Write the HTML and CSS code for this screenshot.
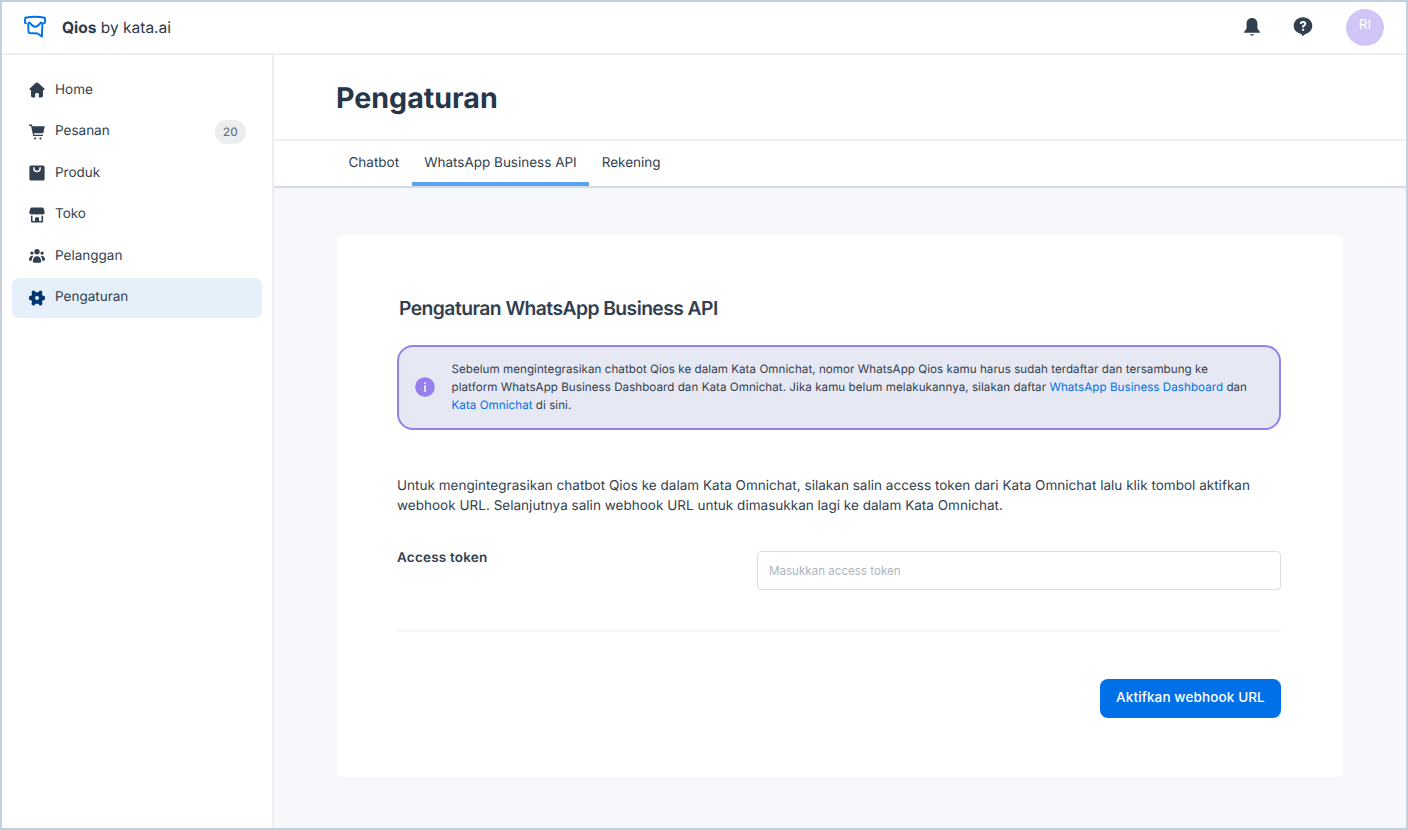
FILE: index.html
```html
<!DOCTYPE html>
<html lang="id">
<head>
<meta charset="utf-8">
<title>Qios by kata.ai</title>
<link rel="stylesheet" href="styles.css">
</head>
<body>
<div class="app">
  <header class="topbar">
    <svg class="logo" viewBox="0 0 24 24" fill="none" stroke="#0070ea" stroke-width="1.9" stroke-linejoin="round" stroke-linecap="round">
      <path d="M2.9 8.2Q1.700 8.200 1.900 7L2.300 2.700Q12 .9 21.800 2.700L22.200 7Q22.200 8.200 20.800 8.200"/>
      <path d="M5.200 9.200Q5.800 6.300 7.300 8.400Q12.300 15 17.200 8.400Q18.600 6.300 19.400 9.200L18.900 21.600 14.600 18.500 6.700 18Q5.600 17.900 5.500 16.800Z"/>
    </svg>
    <div class="brand"><b>Qios</b> by kata.ai</div>
    <div class="actions">
      <svg class="bell" viewBox="0 0 16 18" fill="#323f4f"><path d="M8 0C4.8 0 2.600 2.4 2.600 5.3V9.5Q2.600 11 1.2 12.500Q0 13.500.1 14.700H15.900Q16 13.500 14.8 12.500Q13.400 11 13.400 9.5V5.3C13.400 2.4 11.2 0 8 0ZM5.8 16.300H10.2Q9.600 17.700 8 17.700T5.8 16.300Z"/></svg>
      <svg class="help" viewBox="0 0 20 20"><path fill="#323f4f" d="M10 .3C4.700 .3.700 4 .7 8.800C.7 13.300 3.700 15.800 8.500 17.100L9.300 19.200 12.500 17.100C16.500 15.700 19.300 13 19.300 8.800C19.300 4 15.300 .3 10 .3Z"/><path d="M7.700 6.900Q7.900 5 10 5Q12.300 5 12.300 6.800Q12.300 8.100 10.100 9.200V10.600" fill="none" stroke="#fff" stroke-width="1.900"/><rect x="9.100" y="11.800" width="2" height="2" fill="#fff"/></svg>
      <div class="avatar">RI</div>
    </div>
  </header>
  <div class="body">
    <nav class="sidebar">
      <a class="item"><svg viewBox="0 0 16 16"><path d="M8 .4Q8.500 .4 9 .8L15.300 6.500Q16 7.200 15.300 8H14V13.800Q14 15.500 12.300 15.500H9.800V12Q9.800 10.900 8 10.900T6.200 12V15.500H3.700Q2 15.500 2 13.800V8H.7Q0 7.200 .7 6.500L7 .8Q7.500 .4 8 .4Z"/></svg><span>Home</span></a>
      <a class="item"><svg viewBox="0 0 16 16"><path d="M.2.6H2.900L3.500 2.300H15.700L14.300 9.300H4.900L5.200 10.700H13.900V12.100H4.200L2.100 2H.2Z"/><rect x="5.100" y="13.500" width="2" height="2" rx=".7"/><rect x="10.500" y="13.500" width="2" height="2" rx=".7"/></svg><span>Pesanan</span><span class="count">20</span></a>
      <a class="item"><svg viewBox="0 0 16 16"><rect x=".4" y=".4" width="15.200" height="15.200" rx="1.600"/><path d="M4.900 2.300V3.400C4.900 7.500 11.100 7.500 11.100 3.400V2.300" fill="none" stroke="#fff" stroke-width="1.500"/></svg><span>Produk</span></a>
      <a class="item"><svg viewBox="0 0 16 16"><path d="M3 .6H13Q14.500 .6 14.900 2L15.700 5Q15.800 7.500 13.600 7.600Q12 7.700 11 6.900Q9.600 7.800 8 7.200Q6.400 7.800 5 6.900Q4 7.700 2.400 7.600Q.2 7.500 .3 5L1.100 2Q1.500 .6 3 .6Z"/><path d="M1.900 8.800H3.500V13.900H6V11.300Q6 10.300 7 10.300H9Q10 10.300 10 11.300V13.900H12.500V8.800H14.100V14.200Q14.100 15.500 12.800 15.500H3.200Q1.900 15.500 1.900 14.200Z"/></svg><span>Toko</span></a>
      <a class="item"><svg viewBox="0 0 16 16"><circle cx="8" cy="3.700" r="2.700"/><circle cx="2.900" cy="5.100" r="1.700"/><circle cx="13.100" cy="5.100" r="1.700"/><path d="M8 8.200C10.900 8.200 12 10.200 12.200 13.600Q12.200 14.700 11.100 14.700H4.900Q3.800 14.700 3.800 13.600C4 10.200 5.100 8.200 8 8.200ZM3.600 7.800Q.5 8 0 11.300Q0 12.700 .9 12.700H2.600Q2.800 9.700 4.300 8ZM12.400 7.800Q15.500 8 16 11.300Q16 12.700 15.100 12.700H13.400Q13.200 9.700 11.700 8Z"/></svg><span>Pelanggan</span></a>
      <a class="item active"><svg viewBox="0 0 16 16"><path fill-rule="evenodd" d="M3.600.8Q4.600.3 5.500.8L6.600 2.200H9.400L10.500.8Q11.400.3 12.400.8L13.500 1.900 12.900 4.300 13.800 5.700 15.500 6.100Q16.100 6.700 16 8T15.500 9.900L13.800 10.300 12.900 11.700 13.500 14.100 12.400 15.200Q11.400 15.700 10.500 15.200L9.400 13.800H6.600L5.500 15.200Q4.600 15.700 3.600 15.200L2.500 14.100 3.100 11.700 2.200 10.300 .5 9.900Q-.1 9.300 0 8T.5 6.100L2.200 5.700 3.100 4.300 2.500 1.900ZM8 6A2 2 0 1 0 8 10A2 2 0 1 0 8 6Z"/></svg><span>Pengaturan</span></a>
    </nav>
    <main class="main">
      <div class="page-head"><h1>Pengaturan</h1></div>
      <div class="tabs">
        <a class="tab">Chatbot</a>
        <a class="tab selected">WhatsApp Business API</a>
        <a class="tab">Rekening</a>
      </div>
      <section class="card">
        <h2>Pengaturan WhatsApp Business API</h2>
        <div class="notice">
          <svg class="info" viewBox="0 0 20 20"><circle cx="10" cy="10" r="9.800" fill="#967eec"/><rect x="9.100" y="5.200" width="1.900" height="1.900" rx=".6" fill="#e6e8f4"/><rect x="9.100" y="8.100" width="1.900" height="6.900" fill="#e6e8f4"/></svg>
          <p>Sebelum mengintegrasikan chatbot Qios ke dalam Kata Omnichat, nomor WhatsApp Qios kamu harus sudah terdaftar dan tersambung ke<br>platform WhatsApp Business Dashboard dan Kata Omnichat. Jika kamu belum melakukannya, silakan daftar <a>WhatsApp Business Dashboard</a> dan<br><a>Kata Omnichat</a> di sini.</p>
        </div>
        <p class="intro">Untuk mengintegrasikan chatbot Qios ke dalam Kata Omnichat, silakan salin access token dari Kata Omnichat lalu klik tombol aktifkan<br>webhook URL. Selanjutnya salin webhook URL untuk dimasukkan lagi ke dalam Kata Omnichat.</p>
        <div class="field">
          <label for="token">Access token</label>
          <input id="token" type="text" placeholder="Masukkan access token">
        </div>
        <div class="footer"><button class="submit">Aktifkan webhook URL</button></div>
      </section>
    </main>
  </div>
</div>
</body>
</html>
```
FILE: styles.css
```css
* { box-sizing: border-box; }
body { margin: 0; font-family: Inter, "Liberation Sans", sans-serif; color: #323f4f; text-rendering: geometricPrecision; }
h1, h2, p { margin: 0; }
.app { width: 1408px; height: 830px; border: 2px solid #c5d0dd; background: #fff; display: flex; flex-direction: column; overflow: hidden; }
.topbar { height: 53px; border-bottom: 2px solid #eeeff0; display: flex; align-items: center; padding: 0 22px 1px; flex: none; }
.logo { width: 24px; height: 24px; margin-left: -1px; }
.brand { margin-left: 15px; font-size: 15.5px; color: #2b394b; }
.brand b { font-weight: 700; }
.actions { margin-left: auto; display: flex; align-items: center; }
.bell { width: 16px; height: 18px; }
.help { width: 20px; height: 20px; margin-left: 33px; }
.avatar { width: 38px; height: 37px; margin-left: 33px; border-radius: 50%; background: #d0c5f6; color: #fff; font-size: 13.5px; display: flex; justify-content: center; padding-top: 8px; line-height: 17px; }
.body { flex: 1; display: flex; min-height: 0; }
.sidebar { width: 272px; flex: none; border-right: 2px solid #eeeff0; padding: 15px 10px; display: flex; flex-direction: column; gap: 1.6px; }
.item { height: 40px; flex: none; display: flex; align-items: center; padding: 0 16px 0 17px; border-radius: 7px; font-size: 13.5px; }
.item span:not(.count) { padding-bottom: 1px; }
.item svg { width: 16px; height: 16px; margin-right: 10px; fill: #323f4f; overflow: visible; }
.item.active { background: #e6f0fb; }
.item.active svg { fill: #003670; }
.count { margin-left: auto; width: 31px; height: 24px; border-radius: 12px; background: #ebedef; color: #647282; font-size: 11.6px; font-weight: 500; line-height: 24px; text-align: center; letter-spacing: .3px; }
.main { flex: 1; background: #f6f7fa; min-width: 0; }
.page-head { height: 86px; background: #fff; border-bottom: 2px solid #eeeff0; padding: 25px 63px 0 62px; }
.page-head h1 { font-size: 28.600px; line-height: 36px; font-weight: 700; color: #26374a; }
.tabs { height: 47px; background: #fff; border-bottom: 2px solid #d7dce2; padding-left: 62px; display: flex; }
.tab { padding: 0 12.500px; font-size: 13.5px; line-height: 45px; height: 45px; }
.tab.selected { border-bottom: 4px solid #5ca3ef; }
.card { margin: 47px 0 0 63px; width: 1006px; height: 542px; background: #fff; border-radius: 4px; padding: 61px 62px 0 60px; }
.card h2 { margin-left: 2px; font-size: 19.300px; line-height: 25px; font-weight: 600; letter-spacing: -.55px; }
.notice { margin-top: 24px; height: 85px; border: 2px solid #9680ea; border-radius: 16px; background: #e6e8f4; display: flex; padding: 13px 15.500px; font-size: 11.600px; line-height: 18px; letter-spacing: .05px; white-space: nowrap; }
.info { width: 20px; height: 20px; margin: 17px 17px 0 0; flex: none; }
.notice a { color: #0072e8; }
.intro { margin-top: 46px; font-size: 13.5px; line-height: 20px; letter-spacing: .02px; white-space: nowrap; }
.field { margin-top: 35px; display: flex; justify-content: space-between; height: 81px; border-bottom: 2px solid #f5f6f7; }
.field label { font-size: 13.5px; font-weight: 600; line-height: 17px; letter-spacing: .2px; margin-top: -1px; }
.field input { width: 524px; height: 39px; border: 1px solid #dadee3; border-radius: 4px; padding: 0 11px; font: 11.600px Inter, sans-serif; background: #fff; }
.field input::placeholder { color: #adb5be; }
.footer { display: flex; justify-content: flex-end; padding-top: 47px; }
.submit { width: 181px; height: 39px; border: 0; border-radius: 8px; background: #0070e8; color: #fff; font: 500 13.5px Inter, sans-serif; letter-spacing: .12px; padding: 0 0 3px; white-space: nowrap; }
```
